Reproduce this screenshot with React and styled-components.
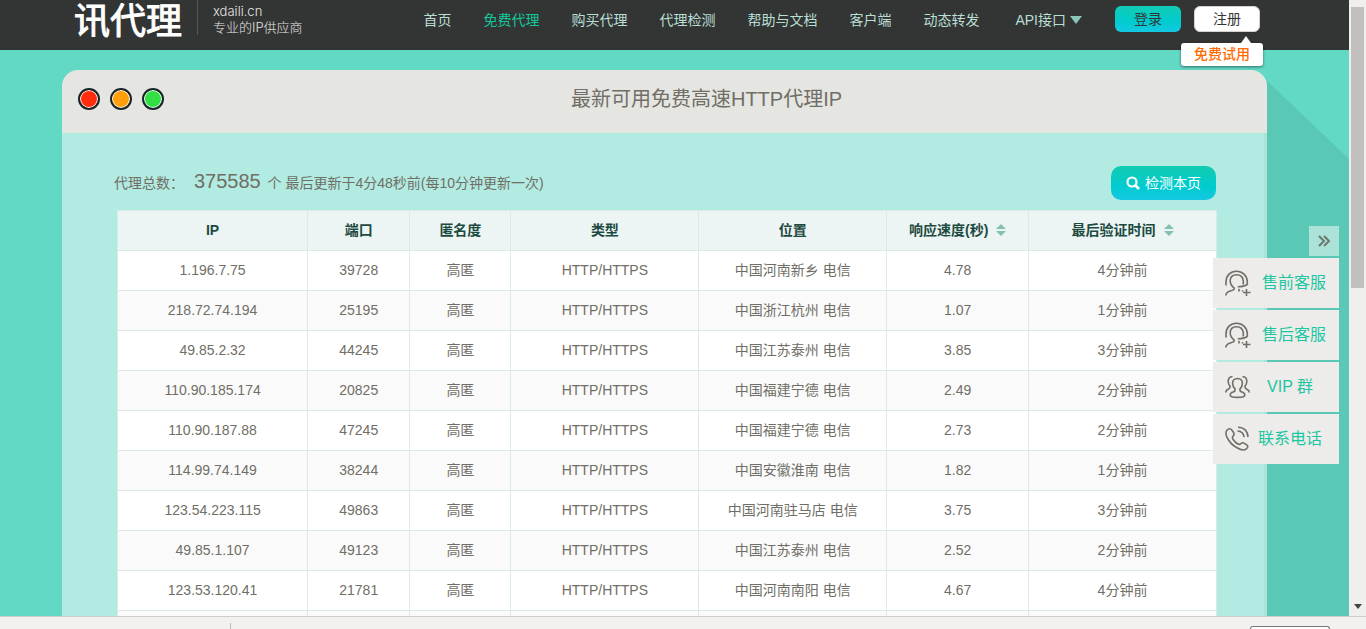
import React from 'react'
import styled, { createGlobalStyle } from 'styled-components'

const navItems = [
    { label: '首页' },
    { label: '免费代理', active: true },
    { label: '购买代理' },
    { label: '代理检测' },
    { label: '帮助与文档' },
    { label: '客户端' },
    { label: '动态转发' },
]

const columns = [
    { title: 'IP', width: '17.3%' },
    { title: '端口', width: '9.3%' },
    { title: '匿名度', width: '9.2%' },
    { title: '类型', width: '17.1%' },
    { title: '位置', width: '17.1%' },
    { title: '响应速度(秒)', width: '12.9%', sortable: true },
    { title: '最后验证时间', width: '17.1%', sortable: true },
]

const proxies = [
    ['1.196.7.75', '39728', '高匿', 'HTTP/HTTPS', '中国河南新乡 电信', '4.78', '4分钟前'],
    ['218.72.74.194', '25195', '高匿', 'HTTP/HTTPS', '中国浙江杭州 电信', '1.07', '1分钟前'],
    ['49.85.2.32', '44245', '高匿', 'HTTP/HTTPS', '中国江苏泰州 电信', '3.85', '3分钟前'],
    ['110.90.185.174', '20825', '高匿', 'HTTP/HTTPS', '中国福建宁德 电信', '2.49', '2分钟前'],
    ['110.90.187.88', '47245', '高匿', 'HTTP/HTTPS', '中国福建宁德 电信', '2.73', '2分钟前'],
    ['114.99.74.149', '38244', '高匿', 'HTTP/HTTPS', '中国安徽淮南 电信', '1.82', '1分钟前'],
    ['123.54.223.115', '49863', '高匿', 'HTTP/HTTPS', '中国河南驻马店 电信', '3.75', '3分钟前'],
    ['49.85.1.107', '49123', '高匿', 'HTTP/HTTPS', '中国江苏泰州 电信', '2.52', '2分钟前'],
    ['123.53.120.41', '21781', '高匿', 'HTTP/HTTPS', '中国河南南阳 电信', '4.67', '4分钟前'],
    ['', '', '', '', '', '', ''],
]

const contacts = [
    { label: '售前客服', icon: AgentIcon, iconWidth: 34 },
    { label: '售后客服', icon: AgentIcon, iconWidth: 34 },
    { label: 'VIP 群', icon: GroupIcon, iconWidth: 26 },
    { label: '联系电话', icon: PhoneIcon, iconWidth: 26 },
]

function AgentIcon() {
    return (
        <LineIcon width="26" height="26" viewBox="0 0 26 26">
            <path d="M1 15.500V12C1 5.500 5.500 1.200 11.500 1.200S22 5.500 22.300 11.500v3.300" />
            <path d="M.8 25.500c.2-2.700 1.700-3.800 4.500-4.500 2.500-.6 4.300-1.300 3.900-2.800C7.200 16.500 5.200 14.500 5.200 11c0-4 2.600-6.300 6.300-6.300s6.500 2.300 6.800 6.300v3.500" />
            <path d="M22.300 14.500c-2.500 1.700-5.500 2.200-9.500 2.200M14 18.800v2.600M17.500 20.200v1.200M21.500 19v7M18 22.500h7.500" />
        </LineIcon>
    )
}

function GroupIcon() {
    return (
        <LineIcon width="26" height="26" viewBox="0 0 26 26">
            <path d="M12.500 4.500c-3.200 0-4.900 1.800-4.900 4.800 0 2.500 1 4.200 2.400 5.500.3 1.800-.3 2.800-1.800 3.200-1.800.5-3 1.300-3 2.900 0 1.800 3 2.500 7.300 2.500s7.300-.7 7.300-2.500c0-1.600-1.200-2.400-3-2.900-1.500-.4-2.100-1.400-1.800-3.200 1.400-1.300 2.400-3 2.400-5.500 0-3-1.700-4.800-4.900-4.800z" />
            <path d="M7.500 2.800C4.800 2.500 3.200 4.300 3.200 7.200c0 2.300.6 3.700 1.800 4.900.2 1.700-.5 2.500-1.800 3.100-1.600.7-2.400 1.500-2.500 3.300M17.500 2.800c2.700-.3 4.300 1.500 4.300 4.400 0 2.300-.6 3.700-1.800 4.900-.2 1.700.5 2.500 1.800 3.100 1.600.7 2.400 1.500 2.500 3.300" />
        </LineIcon>
    )
}

function PhoneIcon() {
    return (
        <LineIcon width="26" height="26" viewBox="0 0 26 26">
            <path d="M2 4.200c1.500-1.700 3.500-2 4.800-.2l1.700 2.500c1 1.500.8 2.500-.5 3.700-1 1-.8 1.800.2 3.300 1.300 2 2.500 3.200 4.300 4.300 1.500.9 2.300.9 3.200-.1 1.200-1.200 2.300-1.300 3.700-.3l2.300 1.500c1.600 1.200 1.300 2.500-.3 3.900-2.200 2-5.500 1.300-9.400-1C7 19 3.500 15 1.700 10.600.8 8.200.6 5.800 2 4.200z" />
            <path d="M13 1.200c6 0 9.800 4 10 9.800M12.500 5c4 .2 6.200 2.500 6.600 6.200" />
        </LineIcon>
    )
}

function SortIcon() {
    return (
        <SortArrows width="10" height="12" viewBox="0 0 10 12">
            <path d="M5 0l5 5H0zM5 12l5-5H0z" />
        </SortArrows>
    )
}

function Header() {
    return (
        <HeaderBar>
            <Brand href="#">
                <BrandName>讯代理</BrandName>
                <BrandInfo>
                    <span>xdaili.cn</span>
                    <span>专业的IP供应商</span>
                </BrandInfo>
            </Brand>
            <Nav>
                {navItems.map(item => (
                    <NavLink key={item.label} href="#" $active={item.active}>{item.label}</NavLink>
                ))}
                <NavMenu href="#">
                    API接口
                    <svg width="12" height="8" viewBox="0 0 12 8"><path d="M0 0h12L6 8z" fill="#8cc6b8" /></svg>
                </NavMenu>
            </Nav>
            <Account>
                <LoginButton type="button">登录</LoginButton>
                <RegisterButton type="button">注册</RegisterButton>
                <TrialTip>免费试用</TrialTip>
            </Account>
        </HeaderBar>
    )
}

function ProxyTable() {
    return (
        <Table>
            <colgroup>
                {columns.map(col => <Col key={col.title} $width={col.width} />)}
            </colgroup>
            <thead>
                <tr>
                    {columns.map(col => (
                        <th key={col.title} scope="col">
                            {col.title}
                            {col.sortable && <SortIcon />}
                        </th>
                    ))}
                </tr>
            </thead>
            <tbody>
                {proxies.map((row, i) => (
                    <tr key={i}>
                        {row.map((cell, j) => <td key={j}>{cell}</td>)}
                    </tr>
                ))}
            </tbody>
        </Table>
    )
}

function ContactDock() {
    return (
        <Dock>
            <DockToggle type="button" aria-label="收起">
                <svg width="12" height="12" viewBox="0 0 12 12" fill="none" stroke="#6d7a70" strokeWidth="2">
                    <path d="M1 1l5 5-5 5M6 1l5 5-5 5" />
                </svg>
            </DockToggle>
            {contacts.map(({ label, icon: Icon, iconWidth }) => (
                <DockLink key={label} href="#">
                    <DockIcon $width={iconWidth}><Icon /></DockIcon>
                    <DockLabel>{label}</DockLabel>
                </DockLink>
            ))}
        </Dock>
    )
}

function App() {
    return (
        <Screen>
            <GlobalStyle />
            <Viewport>
                <Page>
                    <Header />
                    <Content>
                        <Panel>
                            <LongShadow />
                            <PanelHead>
                                <Lights>
                                    <Light $color="#ff2d0c" />
                                    <Light $color="#ff9f0a" />
                                    <Light $color="#32e044" />
                                </Lights>
                                <PanelTitle>最新可用免费高速HTTP代理IP</PanelTitle>
                            </PanelHead>
                            <PanelBody>
                                <Summary>
                                    <p>代理总数： <Total>375585</Total> 个 最后更新于4分48秒前(每10分钟更新一次)</p>
                                    <CheckButton type="button">
                                        <svg width="14" height="14" viewBox="0 0 14 14" fill="none" stroke="#fff">
                                            <circle cx="6" cy="6" r="4.500" strokeWidth="2.200" />
                                            <path d="M9.300 9.300l3.700 3.700" strokeWidth="2.800" />
                                        </svg>
                                        检测本页
                                    </CheckButton>
                                </Summary>
                                <ProxyTable />
                            </PanelBody>
                        </Panel>
                    </Content>
                    <ContactDock />
                </Page>
                <ScrollTrack>
                    <ScrollThumb />
                    <svg width="8" height="5" viewBox="0 0 8 5"><path d="M0 0h8L4 5z" fill="#444" /></svg>
                </ScrollTrack>
            </Viewport>
            <Shelf>
                <ShelfItem />
                <ShelfButton />
            </Shelf>
        </Screen>
    )
}

export default App

const GlobalStyle = createGlobalStyle`
    *{
        box-sizing:border-box;
    }
    body{
        margin:0;
        font-family:"Liberation Sans", "Noto Sans CJK SC", sans-serif;
        font-size:14px;
        line-height:20px;
        color:#706e66;
    }
    p, h1{
        margin:0;
    }
    a{
        text-decoration:none;
    }
    button{
        font:inherit;
        padding:0;
        border:0;
        cursor:pointer;
    }
`

const Screen = styled.div`
    display:flex;
    flex-direction:column;
    height:100vh;
    overflow:hidden;
`

const Viewport = styled.div`
    display:flex;
    flex:1;
    min-height:0;
`

const Page = styled.div`
    position:relative;
    flex:1;
    min-width:0;
    overflow:hidden;
    background:#62d9c5;
`

const HeaderBar = styled.header`
    position:relative;
    z-index:2;
    display:flex;
    align-items:flex-start;
    height:50px;
    padding:0 89px 0 74px;
    background:#333434;
`

const Brand = styled.a`
    display:flex;
    align-items:flex-start;
    color:#fff;
`

const BrandName = styled.span`
    font-family:"Noto Sans CJK SC", sans-serif;
    font-size:36px;
    line-height:36px;
    -webkit-text-stroke:1px #fff;
`

const BrandInfo = styled.span`
    display:flex;
    flex-direction:column;
    margin-left:15px;
    padding:3px 0 0 15px;
    border-left:1px solid #555;
    font-family:Inter, "Noto Sans CJK SC", sans-serif;
    font-size:13px;
    line-height:16px;
    font-weight:300;
    color:#e4e4e2;
`

const Nav = styled.nav`
    display:flex;
    gap:32px;
    margin-left:auto;
    line-height:40px;
`

const NavLink = styled.a`
    color:${props => props.$active ? '#12c79b' : '#b9dfd5'};
`

const NavMenu = styled(NavLink)`
    display:flex;
    align-items:center;
    gap:4px;
    padding:0 33px 0 4px;
`

const Account = styled.div`
    position:relative;
    display:flex;
    gap:13px;
    padding-top:6px;
`

const LoginButton = styled.button`
    width:66px;
    height:26px;
    border-radius:6px;
    background:linear-gradient(#12ccb4, #00cccf 60%, #14c8e2);
    color:#333434;
`

const RegisterButton = styled(LoginButton)`
    border:1px solid #d5d2cf;
    background:#fff;
`

const TrialTip = styled.span`
    position:absolute;
    top:43px;
    right:-3px;
    width:82px;
    border-radius:3px;
    background:#fff;
    box-shadow:0 1px 3px rgba(0, 0, 0, 0.5);
    color:#ff6a00;
    font-weight:500;
    line-height:23px;
    text-align:center;

    &::before{
        content:'';
        position:absolute;
        top:-7px;
        right:12px;
        border:5px solid transparent;
        border-top:0;
        border-bottom:7px solid #fff;
    }
`

const Content = styled.main`
    padding:20px 82px 0 62px;
`

const Panel = styled.section`
    position:relative;
`

// diagonal shade that runs from the panel corner to the page edge
const LongShadow = styled.div`
    position:absolute;
    top:11px;
    bottom:0;
    left:100%;
    width:600px;
    background:#5ac8b5;
    clip-path:polygon(0 0, 600px 571px, 100% 100%, 0 100%);
`

const PanelHead = styled.div`
    display:flex;
    align-items:center;
    height:63px;
    padding:0 18px 6px 16px;
    border-radius:16px 16px 0 0;
    background:#e5e5e1;
`

const Lights = styled.div`
    display:flex;
    gap:10px;
`

const Light = styled.span`
    width:22px;
    height:22px;
    border:2px solid #17242a;
    border-radius:50%;
    background:${props => props.$color};
    box-shadow:inset 0 0 0 1px #fff;
`

const PanelTitle = styled.h1`
    flex:1;
    font-size:20px;
    line-height:28px;
    font-weight:400;
    text-align:center;
`

const PanelBody = styled.div`
    padding:32px 47px 0 52px;
    border-right:3px solid #a9e3d8;
    background:#b2ebe1;
`

const Summary = styled.div`
    display:flex;
    align-items:center;
    justify-content:space-between;
    height:36px;
    padding-right:1px;

    p{
        padding-bottom:2px;
    }
`

const Total = styled.span`
    margin:0 3px 0 6px;
    font-size:20px;
`

const CheckButton = styled.button`
    display:flex;
    align-items:center;
    justify-content:center;
    gap:5px;
    width:105px;
    height:34px;
    border-radius:10px;
    background:linear-gradient(#12ccb0, #00cccf 60%, #14c8e2);
    color:#fff;
`

const Table = styled.table`
    width:calc(100% - 3px);
    margin:9px 0 0 3px;
    border-collapse:collapse;
    table-layout:fixed;
    text-align:center;

    th, td{
        height:40px;
        padding:0 0 2px;
        border:1px solid #d9eae7;
    }
    th{
        background:#ecf5f4;
        color:#1d4a40;
        font-weight:700;
    }
    td{
        background:#fff;
    }
    tbody tr:nth-child(even) td{
        background:#fafafa;
    }
`

const Col = styled.col`
    width:${props => props.$width};
`

const SortArrows = styled.svg`
    margin-left:8px;
    vertical-align:-1px;
    fill:#84bfb0;
`

const Dock = styled.aside`
    position:absolute;
    top:226px;
    right:10px;
    z-index:1;
    display:flex;
    flex-direction:column;
    align-items:flex-end;
    gap:2px;
`

const DockToggle = styled.button`
    display:flex;
    align-items:center;
    justify-content:center;
    width:30px;
    height:30px;
    background:#ace3d8;
`

const DockLink = styled.a`
    display:flex;
    align-items:center;
    width:126px;
    height:50px;
    padding:0 10px 0 12px;
    background:#edecea;
    color:#1cc6a0;
    font-size:16px;
`

const DockIcon = styled.span`
    display:flex;
    width:${props => props.$width}px;
`

const DockLabel = styled.span`
    flex:1;
    text-align:center;
    white-space:nowrap;
`

const LineIcon = styled.svg`
    fill:none;
    stroke:#706e66;
    stroke-width:1.6;
`

const ScrollTrack = styled.div`
    display:flex;
    flex-direction:column;
    align-items:center;
    justify-content:space-between;
    width:17px;
    padding:7px 0;
    background:#f0efee;
`

const ScrollThumb = styled.div`
    width:13px;
    height:281px;
    background:#c1c0bf;
`

const Shelf = styled.footer`
    display:flex;
    justify-content:space-between;
    height:13px;
    padding-right:36px;
    border-top:1px solid #cfcecc;
    background:#f2f1f0;
`

const ShelfItem = styled.div`
    width:231px;
    margin-top:6px;
    border-right:1px solid #bdbcba;
`

const ShelfButton = styled.div`
    width:80px;
    margin-top:9px;
    border:1px solid #777;
    border-bottom:0;
    border-radius:3px 3px 0 0;
    background:#fff;
`
